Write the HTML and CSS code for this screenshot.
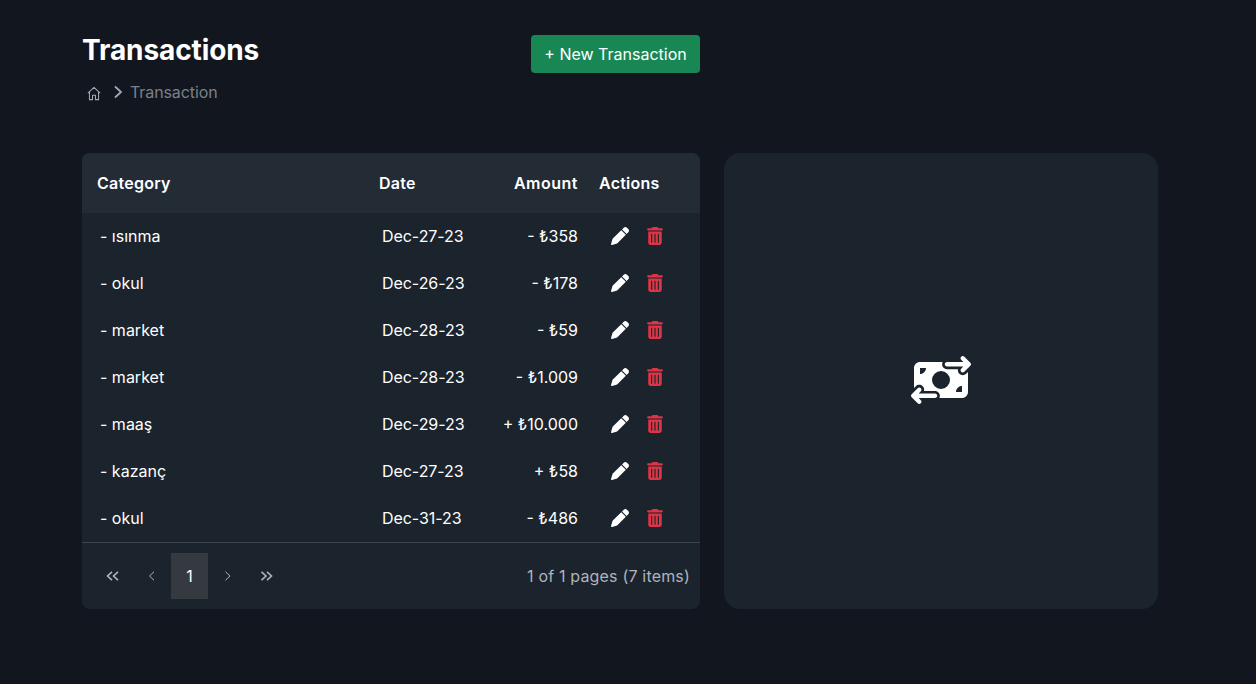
FILE: index.html
```html
<!DOCTYPE html>
<html lang="en">
<head>
<meta charset="UTF-8">
<meta name="viewport" content="width=device-width, initial-scale=1.0">
<title>Transactions</title>
<link rel="stylesheet" href="styles.css">
</head>
<body>
<svg class="sprite" width="0" height="0">
    <symbol id="pen" viewBox="0 0 512 512"><path d="M362.7 19.3L314.3 67.7 444.3 197.7l48.4-48.4c25-25 25-65.5 0-90.5L453.3 19.3c-25-25-65.5-25-90.5 0zm-71 71L58.6 323.5c-10.4 10.4-18 23.3-22.2 37.4L1 481.2C-1.5 489.7 .8 498.8 7 505s15.3 8.5 23.7 6.1l120.3-35.4c14.1-4.2 27-11.8 37.4-22.2L421.7 220.3 291.7 90.3z"/></symbol>
    <symbol id="trash" viewBox="0 0 448 512"><path d="M135.2 17.7C140.6 6.8 151.7 0 163.8 0H284.2c12.1 0 23.2 6.8 28.6 17.7L320 32h96c17.7 0 32 14.3 32 32s-14.3 32-32 32H32C14.3 96 0 81.7 0 64S14.3 32 32 32h96l7.2-14.3zM32 128H416V448c0 35.3-28.7 64-64 64H96c-35.3 0-64-28.7-64-64V128zm96 64c-8.8 0-16 7.2-16 16V432c0 8.8 7.2 16 16 16s16-7.2 16-16V208c0-8.8-7.2-16-16-16zm96 0c-8.8 0-16 7.2-16 16V432c0 8.8 7.2 16 16 16s16-7.2 16-16V208c0-8.8-7.2-16-16-16zm96 0c-8.8 0-16 7.2-16 16V432c0 8.8 7.2 16 16 16s16-7.2 16-16V208c0-8.8-7.2-16-16-16z"/></symbol>
</svg>
<div class="page">
    <div class="left">
        <header class="top">
            <div>
                <h1>Transactions</h1>
                <div class="crumbs">
                    <svg class="home" viewBox="0 0 16 16" fill="none" stroke="currentColor" stroke-width="1.2" stroke-linejoin="round"><path d="M1 7.5 8 1l7 6.500M2.800 6V15H6.300V10H9.700V15H13.200V6"/></svg>
                    <svg class="sep" viewBox="0 0 10 14" fill="none" stroke="currentColor" stroke-width="1.8"><path d="M2 1.500 8 7l-6 5.500"/></svg>
                    <span>Transaction</span>
                </div>
            </div>
            <button class="new-btn">+ New Transaction</button>
        </header>
        <div class="table-card">
            <table>
                <thead>
                    <tr><th class="c-cat">Category</th><th class="c-date">Date</th><th class="c-amt">Amount</th><th class="c-act">Actions</th></tr>
                </thead>
                <tbody>
                    <tr><td class="c-cat">- ısınma</td><td class="c-date">Dec-27-23</td><td class="c-amt">- ₺358</td><td class="c-act"><div class="acts"><svg class="ic-pen"><use href="#pen"/></svg><svg class="ic-trash"><use href="#trash"/></svg></div></td></tr>
                    <tr><td class="c-cat">- okul</td><td class="c-date">Dec-26-23</td><td class="c-amt">- ₺178</td><td class="c-act"><div class="acts"><svg class="ic-pen"><use href="#pen"/></svg><svg class="ic-trash"><use href="#trash"/></svg></div></td></tr>
                    <tr><td class="c-cat">- market</td><td class="c-date">Dec-28-23</td><td class="c-amt">- ₺59</td><td class="c-act"><div class="acts"><svg class="ic-pen"><use href="#pen"/></svg><svg class="ic-trash"><use href="#trash"/></svg></div></td></tr>
                    <tr><td class="c-cat">- market</td><td class="c-date">Dec-28-23</td><td class="c-amt">- ₺1.009</td><td class="c-act"><div class="acts"><svg class="ic-pen"><use href="#pen"/></svg><svg class="ic-trash"><use href="#trash"/></svg></div></td></tr>
                    <tr><td class="c-cat">- maaş</td><td class="c-date">Dec-29-23</td><td class="c-amt">+ ₺10.000</td><td class="c-act"><div class="acts"><svg class="ic-pen"><use href="#pen"/></svg><svg class="ic-trash"><use href="#trash"/></svg></div></td></tr>
                    <tr><td class="c-cat">- kazanç</td><td class="c-date">Dec-27-23</td><td class="c-amt">+ ₺58</td><td class="c-act"><div class="acts"><svg class="ic-pen"><use href="#pen"/></svg><svg class="ic-trash"><use href="#trash"/></svg></div></td></tr>
                    <tr><td class="c-cat">- okul</td><td class="c-date">Dec-31-23</td><td class="c-amt">- ₺486</td><td class="c-act"><div class="acts"><svg class="ic-pen"><use href="#pen"/></svg><svg class="ic-trash"><use href="#trash"/></svg></div></td></tr>
                </tbody>
            </table>
            <div class="pager">
                <div class="pages">
                    <span class="pg"><svg viewBox="0 0 16 10" fill="none" stroke="currentColor" stroke-width="1.6"><path d="M6 .8 1.500 5 6 9.200M12 .8 7.500 5 12 9.200"/></svg></span>
                    <span class="pg"><svg viewBox="0 0 16 10" fill="none" stroke="currentColor"><path d="M10 .8 5.500 5 10 9.200"/></svg></span>
                    <span class="pg current">1</span>
                    <span class="pg"><svg viewBox="0 0 16 10" fill="none" stroke="currentColor"><path d="M6.500 .8 11 5 6.500 9.200"/></svg></span>
                    <span class="pg"><svg viewBox="0 0 16 10" fill="none" stroke="currentColor" stroke-width="1.6"><path d="M4.500 .8 9 5 4.500 9.200M10 .8 14.500 5 10 9.200"/></svg></span>
                </div>
                <div class="page-info">1 of 1 pages (7 items)</div>
            </div>
        </div>
    </div>
    <div class="chart-card">
        <svg class="money" viewBox="0 0 640 512"><path d="M535 41c-9.4-9.4-9.4-24.6 0-33.9s24.6-9.4 33.9 0l64 64c4.5 4.500 7 10.600 7 17s-2.500 12.500-7 17l-64 64c-9.400 9.400-24.600 9.400-33.900 0s-9.400-24.600 0-33.900l23-23L384 112c-13.300 0-24-10.700-24-24s10.700-24 24-24l174.100 0L535 41zM105 377l-23 23L256 400c13.300 0 24 10.700 24 24s-10.700 24-24 24L81.900 448l23 23c9.400 9.400 9.400 24.600 0 33.900s-24.600 9.400-33.900 0L7 441c-4.500-4.500-7-10.600-7-17s2.500-12.500 7-17l64-64c9.400-9.400 24.600-9.400 33.900 0s9.400 24.600 0 33.900zM96 64H337.900c-3.700 7.200-5.900 15.300-5.900 24c0 28.700 23.300 52 52 52l117.400 0c-4 17 .6 35.500 13.800 48.800c20.300 20.300 53.200 20.300 73.500 0L608 169.500V384c0 35.300-28.700 64-64 64H302.100c3.700-7.200 5.900-15.300 5.900-24c0-28.700-23.300-52-52-52l-117.400 0c4-17-.6-35.500-13.800-48.800c-20.300-20.300-53.200-20.300-73.500 0L32 342.500V128c0-35.300 28.700-64 64-64zm0 64v64c35.300 0 64-28.700 64-64H96zM544 384V320c-35.300 0-64 28.700-64 64h64zM320 352a96 96 0 1 0 0-192 96 96 0 1 0 0 192z" fill-rule="evenodd"/></svg>
    </div>
</div>
</body>
</html>
```

FILE: styles.css
```css
html, body {
    margin: 0;
    height: 100%;
}
body {
    background-color: #12171f;
    color: #fff;
    font-family: Inter, sans-serif;
    font-size: 16px;
}
.sprite {
    position: absolute;
}
.page {
    display: flex;
    align-items: flex-end;
    gap: 24px;
    padding: 0 0 0 82px;
    height: 609px;
}
.left {
    width: 618px;
}
.top {
    display: flex;
    justify-content: space-between;
    align-items: flex-start;
    height: 153px;
    padding-top: 35px;
    box-sizing: border-box;
}
h1 {
    margin: 0;
    font-size: 28px;
    line-height: 30px;
    font-weight: 700;
    letter-spacing: -0.1px;
}
.crumbs {
    display: flex;
    align-items: center;
    margin: 15px 0 0 5px;
    height: 24px;
    color: #7a808a;
    letter-spacing: -0.1px;
}
.home {
    width: 14px;
    height: 15px;
    margin-top: 3px;
    color: #a3a9b2;
}
.sep {
    width: 10px;
    height: 14px;
    margin: -1px 7px 0 12px;
    color: #a3a9b2;
}
.new-btn {
    width: 169px;
    height: 38px;
    padding: 0;
    border: none;
    border-radius: 4px;
    background-color: #198754;
    color: #fff;
    font-family: Inter, sans-serif;
    font-size: 16px;
}
.table-card {
    background-color: #1b232d;
    border-radius: 8px;
    overflow: hidden;
    height: 456px;
}
table {
    width: 100%;
    border-collapse: collapse;
    table-layout: fixed;
}
thead tr {
    height: 60px;
    background-color: #232b35;
}
th {
    font-weight: 600;
    text-align: left;
    padding: 0 0 1px;
    letter-spacing: 0.25px;
}
tbody tr {
    height: 47px;
}
td {
    padding: 0 0 1px;
}
th.c-cat {
    width: 282px;
    padding-left: 15px;
}
td.c-cat {
    padding-left: 18px;
}
th.c-date {
    width: 103px;
}
td.c-date {
    padding-left: 3px;
    letter-spacing: -0.05px;
}
.c-amt {
    width: 96px;
    text-align: right;
}
th.c-amt {
    letter-spacing: 0.5px;
}
th.c-act {
    padding-left: 21px;
}
.acts {
    display: flex;
    align-items: center;
    gap: 18px;
    padding-left: 33px;
}
.ic-pen {
    width: 18px;
    height: 18px;
    fill: #fff;
}
.ic-trash {
    width: 16px;
    height: 18px;
    fill: #dc3545;
}
.pager {
    display: flex;
    justify-content: space-between;
    align-items: center;
    height: 67px;
    box-sizing: border-box;
    border-top: 1px solid #3c444e;
    padding: 0 10px 0 13px;
}
.pages {
    display: flex;
}
.pg {
    display: flex;
    align-items: center;
    justify-content: center;
    width: 38px;
    height: 46px;
    color: #adb5bd;
}
.pg svg {
    width: 16px;
    height: 10px;
}
.pg.current {
    width: 37px;
    background-color: #343a40;
    color: #fff;
}
.page-info {
    color: #adb5bd;
    letter-spacing: 0.18px;
}
.chart-card {
    display: flex;
    align-items: center;
    justify-content: center;
    width: 434px;
    height: 456px;
    box-sizing: border-box;
    padding-bottom: 2px;
    background-color: #1b232d;
    border-radius: 16px;
}
.money {
    width: 60px;
    height: 48px;
    fill: #fff;
}
```
